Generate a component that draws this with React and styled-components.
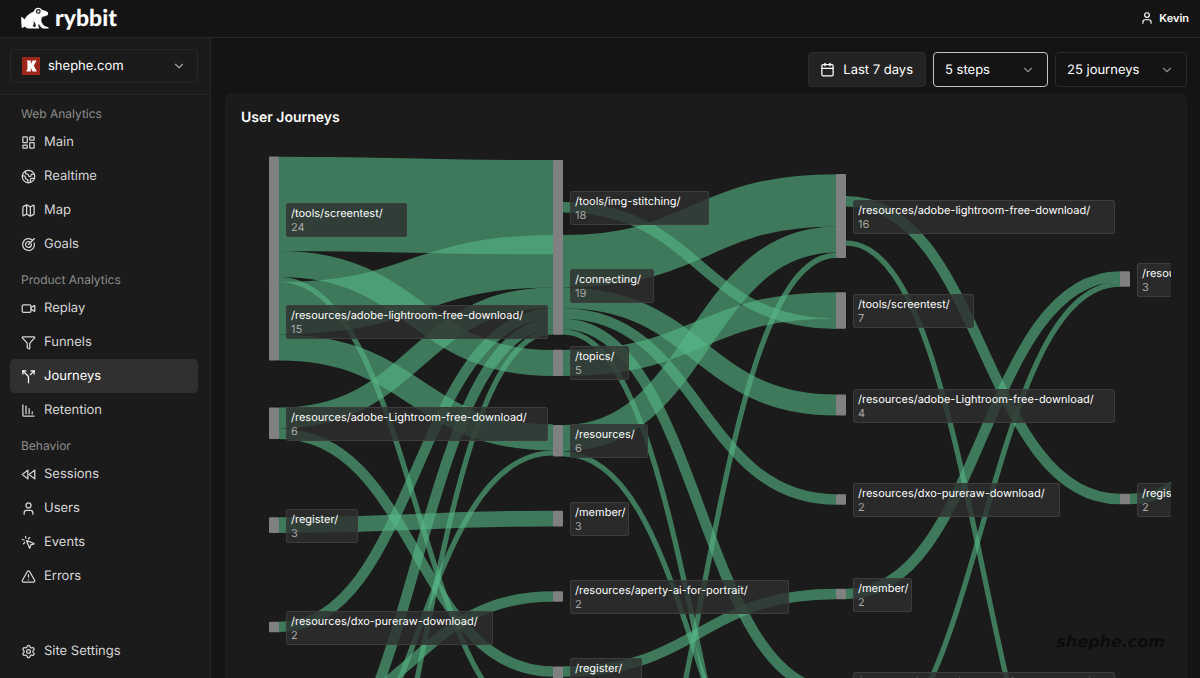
import React, { useState } from 'react'
import styled, { createGlobalStyle } from 'styled-components'
import {
    Calendar,
    ChartColumnDecreasing,
    ChevronDown,
    Earth,
    Funnel,
    LayoutDashboard,
    Map,
    MousePointerClick,
    Settings,
    Split,
    TriangleAlert,
    User,
    Video,
} from 'lucide-react'

// Sankey geometry, in chart pixels
const UNIT = 5.235;
const BAR = 10;
const COLUMNS = [
    { x: 28, first: 79.4, step: 101.9 },
    { x: 312, first: 67.2, step: 77.85 },
    { x: 595, first: 76, step: 94.5 },
    { x: 879, first: 139, step: 220 },
    { x: 1163, first: 76, step: 220 },
];

const NODES = [
    { col: 0, slot: 0, value: 24, name: '/tools/screentest/' },
    { col: 0, slot: 1, value: 15, name: '/resources/adobe-lightroom-free-download/' },
    { col: 0, slot: 2, value: 6, name: '/resources/adobe-Lightroom-free-download/' },
    { col: 0, slot: 3, value: 3, name: '/register/' },
    { col: 0, slot: 4, value: 2, name: '/resources/dxo-pureraw-download/' },
    { col: 1, slot: 0, value: 18, name: '/tools/img-stitching/' },
    { col: 1, slot: 1, value: 19, name: '/connecting/' },
    { col: 1, slot: 2, value: 5, name: '/topics/' },
    { col: 1, slot: 3, value: 6, name: '/resources/' },
    { col: 1, slot: 4, value: 3, name: '/member/' },
    { col: 1, slot: 5, value: 2, name: '/resources/aperty-ai-for-portrait/' },
    { col: 1, slot: 6, value: 3, name: '/register/' },
    { col: 2, slot: 0, value: 16, name: '/resources/adobe-lightroom-free-download/' },
    { col: 2, slot: 1, value: 7, name: '/tools/screentest/' },
    { col: 2, slot: 2, value: 4, name: '/resources/adobe-Lightroom-free-download/' },
    { col: 2, slot: 3, value: 2, name: '/resources/dxo-pureraw-download/' },
    { col: 2, slot: 4, value: 2, name: '/member/' },
    { col: 2, slot: 5, value: 2, name: '/resources/adobe-lightroom-free-download/' },
    { col: 3, slot: 0, value: 3, name: '/resources/' },
    { col: 3, slot: 1, value: 2, name: '/register/' },
];

// from: column, y0/y1: centre of the band at each end
const LINKS = [
    { from: 0, y0: 63.9, y1: 67.2, value: 18 },
    { from: 0, y0: 124, y1: 223, value: 5 },
    { from: 0, y0: 139.5, y1: 591, value: 1 },
    { from: 0, y0: 168.2, y1: 121.2, value: 10 },
    { from: 0, y0: 207.5, y1: 297.4, value: 5 },
    { from: 0, y0: 278, y1: 157.9, value: 4 },
    { from: 0, y0: 293.7, y1: 531.5, value: 2 },
    { from: 0, y0: 385.1, y1: 378.6, value: 3 },
    { from: 0, y0: 487, y1: 173.6, value: 2 },
    { from: 0, y0: 663, y1: 184, value: 2 },
    { from: 0, y0: 898, y1: 191.9, value: 1 },
    { from: 0, y0: 681, y1: 313, value: 1 },
    { from: 0, y0: 578, y1: 456.5, value: 2 },
    { from: 1, y0: 67.2, y1: 183.7, value: 2 },
    { from: 1, y0: 121.2, y1: 60.3, value: 10 },
    { from: 1, y0: 157.9, y1: 265, value: 4 },
    { from: 1, y0: 173.6, y1: 359.5, value: 2 },
    { from: 1, y0: 184, y1: 551, value: 2 },
    { from: 1, y0: 191.9, y1: 831.5, value: 1 },
    { from: 1, y0: 223, y1: 165.3, value: 5 },
    { from: 1, y0: 298.2, y1: 99.5, value: 5 },
    { from: 1, y0: 313.9, y1: 737, value: 1 },
    { from: 1, y0: 822, y1: 115.3, value: 1 },
    { from: 1, y0: 531.5, y1: 454, value: 2 },
    { from: 2, y0: 61.2, y1: 359, value: 2 },
    { from: 2, y0: 103, y1: 757, value: 1 },
    { from: 2, y0: 454, y1: 136.4, value: 2 },
    { from: 2, y0: 622, y1: 144.2, value: 1 },
    { from: 3, y0: 359, y1: 40, value: 2 },
];

const nodeY = ({ col, slot }) => COLUMNS[col].first + COLUMNS[col].step * slot;

const linkPath = ({ from, y0, y1 }) => {
    const x0 = COLUMNS[from].x + BAR;
    const x1 = COLUMNS[from + 1].x;
    const mid = (x0 + x1) / 2;
    return `M${x0},${y0}C${mid},${y0} ${mid},${y1} ${x1},${y1}`;
}

const GoalsIcon = () => (
    <svg viewBox="0 0 24 24" fill="none" stroke="currentColor" strokeWidth="2" strokeLinecap="round" strokeLinejoin="round">
        <path d="M12 12 21.5 2.500" />
        <path d="M18.700 5.300A9.500 9.500 0 1 0 21.200 9.500" />
        <path d="M15.300 8.700A4.700 4.700 0 1 0 16.600 11" />
    </svg>
)

const SessionsIcon = () => (
    <svg viewBox="0 0 24 24" fill="none" stroke="currentColor" strokeWidth="2" strokeLinecap="round" strokeLinejoin="round">
        <path d="M11 19 2 12l9-7z" />
        <path d="m22 19-9-7 9-7z" />
    </svg>
)

const FrogLogo = () => (
    <svg width="28" height="22" viewBox="0 0 28 22" aria-hidden="true">
        <path
            fill="#fff"
            d="M.4 9.600 3.600 12.200C5.800 8.400 9 6 12.800 4.500 13.500 2.200 15 .7 17.200.7c1.700 0 3 .8 3.700 2.100 2.500.6 4.900 1.500 5.900 2.500.6.9.4 2.400-.6 3.300-1.700 1.300-3.600 1.400-5.200 2.500-1 1.100-.9 2.800-.2 4.300.8 1.900 2.300 3.500 4.200 4.200l2.300.7c.6.300.5 1.300-.2 1.300h-5.200c-1.800-.8-3.200-2.700-4.200-5-.4 1.600-.4 3 .1 3.700.5.400.5 1.300-.2 1.300h-4.300c-.5-1 .5-1.800 1.400-2 .4-2-.4-4.300-2.600-5.600 1.200 2.100.8 3.900-.6 5.100l1.900.8c.7.500.6 1.700-.2 1.700H7.200c-1.500-.2-2.600-.9-3.500-2L1 21.200c-.6-1.500-.9-7-.6-11.600z"
        />
        <circle cx="17.300" cy="4.400" r="1.800" fill="none" stroke="#141414" strokeWidth="1.200" />
        <path d="m20.500 10.800c2-1.300 3.800-1.100 5.400-2" fill="none" stroke="#141414" strokeWidth=".8" />
    </svg>
)

const MENU = [
    {
        title: 'Web Analytics',
        items: [
            { label: 'Main', icon: LayoutDashboard },
            { label: 'Realtime', icon: Earth },
            { label: 'Map', icon: Map },
            { label: 'Goals', icon: GoalsIcon },
        ],
    },
    {
        title: 'Product Analytics',
        items: [
            { label: 'Replay', icon: Video },
            { label: 'Funnels', icon: Funnel },
            { label: 'Journeys', icon: Split },
            { label: 'Retention', icon: ChartColumnDecreasing },
        ],
    },
    {
        title: 'Behavior',
        items: [
            { label: 'Sessions', icon: SessionsIcon },
            { label: 'Users', icon: User },
            { label: 'Events', icon: MousePointerClick },
            { label: 'Errors', icon: TriangleAlert },
        ],
    },
];

const JourneyChart = () => (
    <Chart>
        <ChartSvg role="img" aria-label="User journeys">
            {LINKS.map((link, i) => (
                <Link key={i} d={linkPath(link)} strokeWidth={link.value * UNIT} />
            ))}
            {NODES.map((node, i) => (
                <Bar
                    key={i}
                    x={COLUMNS[node.col].x}
                    y={nodeY(node) - node.value * UNIT / 2}
                    width={BAR}
                    height={node.value * UNIT}
                    rx="1"
                />
            ))}
        </ChartSvg>
        {NODES.map((node, i) => (
            <NodeLabel
                key={i}
                style={{
                    left: COLUMNS[node.col].x + BAR + 7,
                    top: Math.round(nodeY(node) - 16.4),
                    width: Math.round(node.name.length * 6.13 + 10.4),
                }}
            >
                <span>{node.name}</span>
                <small>{node.value}</small>
            </NodeLabel>
        ))}
    </Chart>
)

const App = () => {
    const [steps, setSteps] = useState('5');
    const [journeys, setJourneys] = useState('25');

    return (
        <Shell>
            <GlobalStyle />
            <TopBar>
                <Brand href="#">
                    <FrogLogo />
                    <span>rybbit</span>
                </Brand>
                <UserButton type="button">
                    <User />
                    Kevin
                </UserButton>
            </TopBar>
            <Body>
                <Sidebar>
                    <SiteArea>
                        <SiteButton type="button">
                            <Favicon viewBox="0 0 18 18" aria-hidden="true">
                                <rect width="18" height="18" fill="#9c2718" />
                                <path fill="#fff" d="M5 3.500h3.800v3.800L10.500 3.500h4L11.800 8.700l3 5.800h-4.200L8.800 10.700v3.800H4.600V13l.8-.6V5L5 4.600z" />
                            </Favicon>
                            <span>shephe.com</span>
                            <ChevronDown />
                        </SiteButton>
                    </SiteArea>
                    <Nav>
                        {MENU.map((section) => (
                            <div key={section.title}>
                                <SectionTitle>{section.title}</SectionTitle>
                                {section.items.map(({ label, icon: Icon }) => (
                                    <NavItem key={label} href="#" $active={label === 'Journeys'}>
                                        <Icon />
                                        {label}
                                    </NavItem>
                                ))}
                            </div>
                        ))}
                    </Nav>
                    <SidebarFooter>
                        <NavItem href="#">
                            <Settings />
                            Site Settings
                        </NavItem>
                    </SidebarFooter>
                </Sidebar>
                <Main>
                    <Toolbar>
                        <DateButton type="button">
                            <Calendar />
                            Last 7 days
                        </DateButton>
                        <SelectBox $width={115} $focused>
                            <select aria-label="Steps" value={steps} onChange={(e) => setSteps(e.target.value)}>
                                <option value="3">3 steps</option>
                                <option value="4">4 steps</option>
                                <option value="5">5 steps</option>
                            </select>
                            <ChevronDown />
                        </SelectBox>
                        <SelectBox $width={132}>
                            <select aria-label="Journeys" value={journeys} onChange={(e) => setJourneys(e.target.value)}>
                                <option value="25">25 journeys</option>
                                <option value="50">50 journeys</option>
                            </select>
                            <ChevronDown />
                        </SelectBox>
                    </Toolbar>
                    <Card>
                        <CardTitle>User Journeys</CardTitle>
                        <JourneyChart />
                        <Watermark>shephe.com</Watermark>
                    </Card>
                </Main>
            </Body>
        </Shell>
    )
}

export default App

const GlobalStyle = createGlobalStyle`
    * {
        box-sizing: border-box;
    }
    body {
        margin: 0;
        background: #141414;
        color: #fff;
        font-family: Inter, "Liberation Sans", sans-serif;
        font-size: 13px;
        text-rendering: geometricPrecision;
    }
    button, select {
        font: inherit;
        color: inherit;
        text-rendering: inherit;
    }
    a {
        color: inherit;
        text-decoration: none;
    }
`;

const Shell = styled.div`
    height: 100vh;
    display: flex;
    flex-direction: column;
    overflow: hidden;
`;

const TopBar = styled.header`
    display: flex;
    flex: none;
    align-items: center;
    justify-content: space-between;
    height: 38px;
    padding: 0 11px 2px 21px;
    border-bottom: 1px solid #272727;
`;

const Brand = styled.a`
    display: flex;
    align-items: center;
    gap: 6px;
    font-family: Lato, sans-serif;
    font-size: 23px;
    line-height: 22px;
    font-weight: 900;
    span {
        padding-bottom: 2px;
    }
`;

const UserButton = styled.button`
    display: flex;
    align-items: center;
    gap: 5px;
    padding: 0;
    border: 0;
    background: none;
    font-size: 11px;
    font-weight: 600;
    svg {
        width: 14px;
        height: 14px;
    }
`;

const Body = styled.div`
    display: flex;
    flex: 1;
    min-height: 0;
`;

const Sidebar = styled.aside`
    display: flex;
    flex: none;
    flex-direction: column;
    width: 211px;
    background: #1b1b1b;
    border-right: 1px solid #242424;
`;

const SiteArea = styled.div`
    padding: 11px 12px 11px 10px;
    border-bottom: 1px solid #272727;
`;

const SiteButton = styled.button`
    display: flex;
    align-items: center;
    gap: 8px;
    width: 100%;
    height: 34px;
    padding: 0 11px;
    border: 1px solid #272727;
    border-radius: 4px;
    background: none;
    span {
        flex: 1;
        text-align: left;
    }
    svg:last-child {
        width: 14px;
        height: 14px;
        color: #a3a3a3;
    }
`;

const Favicon = styled.svg`
    width: 18px;
    height: 18px;
`;

const Nav = styled.nav`
    flex: 1;
    padding: 0 12px 0 10px;
`;

const SectionTitle = styled.div`
    height: 30px;
    padding: 11px 11px 0;
    font-size: 12px;
    line-height: 16px;
    color: #8c8c8c;
`;

const NavItem = styled.a`
    display: flex;
    align-items: center;
    gap: 8px;
    height: 34px;
    padding: 0 11px;
    border-radius: 5px;
    background: ${({ $active }) => ($active ? '#303030' : 'transparent')};
    color: ${({ $active }) => ($active ? '#fff' : '#d6d6d6')};
    svg {
        width: 15px;
        height: 15px;
    }
`;

const SidebarFooter = styled.div`
    padding: 0 12px 10px 10px;
`;

const Main = styled.main`
    flex: 1;
    min-width: 0;
    padding: 14px 13px 0 14px;
    overflow: hidden;
`;

const Toolbar = styled.div`
    display: flex;
    justify-content: flex-end;
    gap: 7px;
    margin-bottom: 7px;
`;

const DateButton = styled.button`
    display: flex;
    align-items: center;
    gap: 8px;
    height: 35px;
    padding: 0 12px 0 11px;
    border: 1px solid #2c2c2c;
    border-radius: 4px;
    background: #232323;
    svg {
        width: 15px;
        height: 15px;
    }
`;

const SelectBox = styled.div`
    position: relative;
    width: ${({ $width }) => $width}px;
    height: 35px;
    select {
        width: 100%;
        height: 100%;
        padding: 0 11px;
        appearance: none;
        border: 1px solid ${({ $focused }) => ($focused ? '#c4c4c4' : '#2a2a2a')};
        border-radius: 4px;
        background: #141414;
    }
    svg {
        position: absolute;
        right: 13px;
        top: 11px;
        width: 14px;
        height: 14px;
        color: #8a8a8a;
        pointer-events: none;
    }
`;

const Card = styled.section`
    position: relative;
    padding: 13px 15px;
    border: 1px solid #1f1f1f;
    border-radius: 5px;
    background: #1b1b1b;
`;

const CardTitle = styled.h2`
    margin: 0 0 12px;
    font-size: 14px;
    line-height: 20px;
    font-weight: 600;
`;

const Chart = styled.div`
    position: relative;
    height: 900px;
    overflow: hidden;
`;

const ChartSvg = styled.svg`
    display: block;
    width: 100%;
    height: 100%;
`;

const Link = styled.path`
    fill: none;
    stroke: #57b987;
    stroke-opacity: 0.6;
`;

const Bar = styled.rect`
    fill: #808080;
`;

const NodeLabel = styled.div`
    position: absolute;
    display: flex;
    flex-direction: column;
    height: 34px;
    padding: 2px 4px;
    border: 1px solid #3d3d3d;
    border-radius: 2px;
    background: rgba(46, 46, 46, 0.8);
    font-size: 11px;
    line-height: 15px;
    white-space: nowrap;
    small {
        font-size: 11px;
        line-height: 13px;
        color: #a8a8a8;
    }
`;

const Watermark = styled.div`
    position: absolute;
    right: 21px;
    top: 537px;
    font-family: "DejaVu Sans", sans-serif;
    font-size: 16px;
    line-height: 20px;
    font-weight: 700;
    font-style: italic;
    color: #0c0c0c;
`;
